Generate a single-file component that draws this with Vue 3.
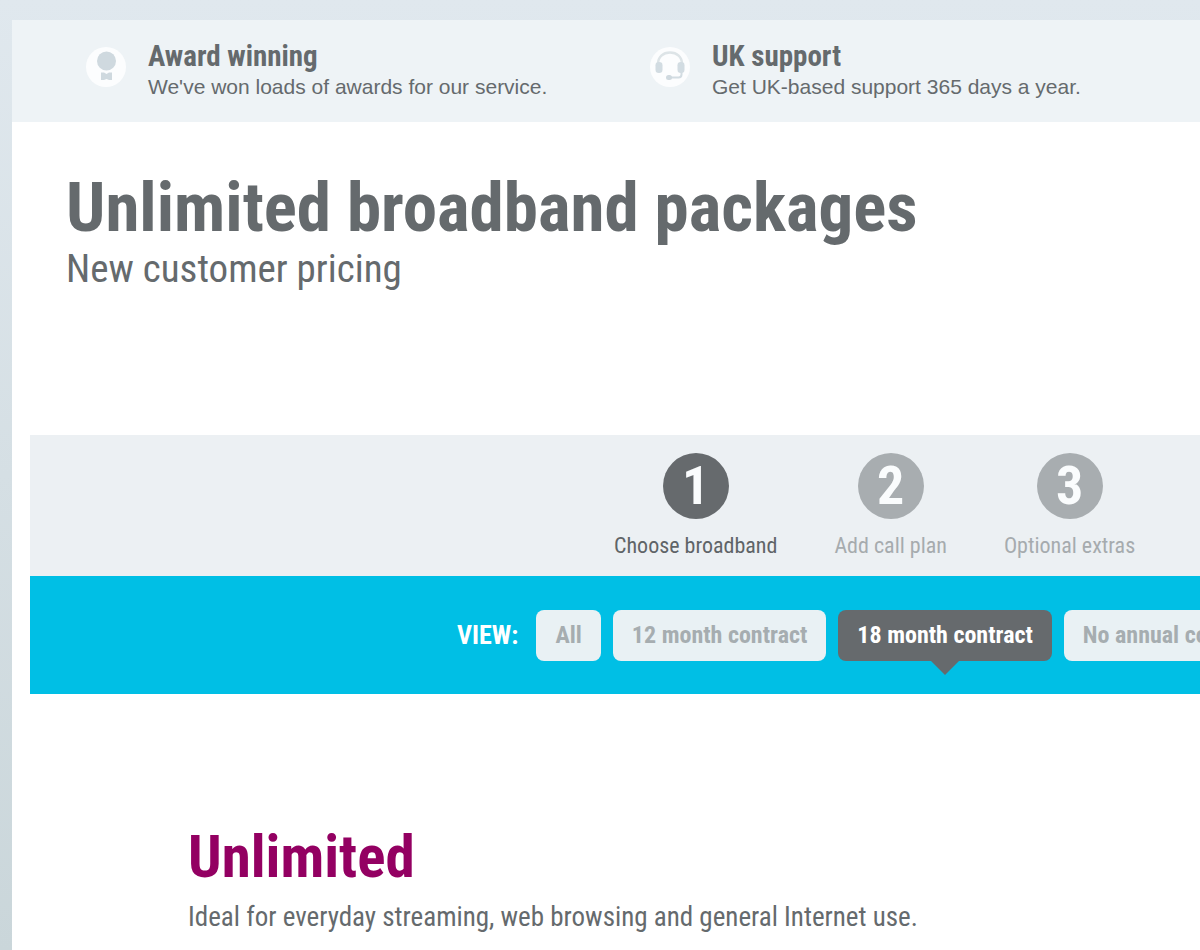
<script setup>
import { ref } from 'vue'

const steps = ['Choose broadband', 'Add call plan', 'Optional extras']
const currentStep = ref(0)

const contracts = ['All', '12 month contract', '18 month contract', 'No annual contract']
const selected = ref('18 month contract')
</script>

<template>
  <div class="page">
    <div class="sheet">
      <section class="benefits">
        <div class="benefit">
          <svg class="badge" viewBox="0 0 40 40" aria-hidden="true">
            <circle cx="20" cy="20" r="20" fill="#fcfdfe" />
            <path d="M15 25.500h3l2.500 1.500 2.500-1.500h3v7.500h-3l-2.500-1-2.500 1h-3z" fill="#cfd9df" />
            <circle cx="20.500" cy="14" r="9.500" fill="#cfd9df" />
          </svg>
          <div>
            <h2 class="benefit-title">Award winning</h2>
            <p class="benefit-text">We've won loads of awards for our service.</p>
          </div>
        </div>
        <div class="benefit">
          <svg class="badge" viewBox="0 0 40 40" aria-hidden="true">
            <circle cx="20" cy="20" r="20" fill="#fcfdfe" />
            <path d="M8 17C8 10 13 5.500 20 5.500S32 10 32 17" fill="none" stroke="#dde4e7" stroke-width="2.500" />
            <rect x="5.500" y="15" width="7" height="11" rx="3.300" fill="#d2dce2" />
            <rect x="27.500" y="15" width="7" height="11" rx="3.300" fill="#d2dce2" />
            <path d="M31.500 25v2.500q0 3-3 3H20" fill="none" stroke="#d2dce2" stroke-width="2" />
            <rect x="16" y="28" width="6" height="5" rx="2.500" fill="#cfd9df" />
          </svg>
          <div>
            <h2 class="benefit-title">UK support</h2>
            <p class="benefit-text">Get UK-based support 365 days a year.</p>
          </div>
        </div>
      </section>

      <header class="heading">
        <h1>Unlimited broadband packages</h1>
        <p>New customer pricing</p>
      </header>

      <main class="panel">
        <ol class="steps">
          <li v-for="(step, i) in steps" :key="step">
            <button
              type="button"
              class="step"
              :class="{ current: i === currentStep }"
              @click="currentStep = i"
            >
              <span class="number">{{ i + 1 }}</span>
              <span class="step-label">{{ step }}</span>
            </button>
          </li>
        </ol>

        <div class="filter" role="group" aria-labelledby="view-label">
          <span id="view-label" class="view">VIEW:</span>
          <button
            v-for="contract in contracts"
            :key="contract"
            type="button"
            class="choice"
            :class="{ active: contract === selected }"
            :aria-pressed="contract === selected"
            @click="selected = contract"
          >{{ contract }}</button>
        </div>

        <section class="package">
          <h2>Unlimited</h2>
          <p>Ideal for everyday streaming, web browsing and general Internet use.</p>
        </section>
      </main>
    </div>
  </div>
</template>

<style>
body {
  margin: 0;
}
</style>

<style scoped>
.page {
  box-sizing: border-box;
  min-height: 100vh;
  padding: 20px 0 0 12px;
  display: flex;
  overflow: hidden;
  background: linear-gradient(#e0e8ee, #cad6da);
  color: #656a6d;
  font-family: "Roboto Condensed", "Liberation Sans Narrow", Roboto, sans-serif;
}

h1, h2, p, ol {
  margin: 0;
  padding: 0;
}

button {
  border: 0;
  font: inherit;
  cursor: pointer;
}

.sheet {
  flex: 1;
  min-width: 0;
  background: #fff;
}

.benefits {
  display: flex;
  padding: 20px 0 20px 74px;
  background: #eef3f6;
}

.benefit {
  flex: 0 0 564px;
  display: flex;
  align-items: center;
  gap: 22px;
  height: 62px;
}

.badge {
  width: 40px;
  height: 40px;
  margin-bottom: 8px;
}

.benefit-title {
  font-size: 29px;
  line-height: 32px;
  white-space: nowrap;
}

.benefit-text {
  font-family: "Liberation Sans", Arial, sans-serif;
  font-size: 21px;
  line-height: 30px;
  white-space: nowrap;
}

.heading {
  padding: 48px 0 0 54px;
  white-space: nowrap;
}

.heading h1 {
  font-size: 69px;
  line-height: 76px;
}

.heading p {
  font-size: 39px;
  line-height: 46px;
}

.panel {
  margin: 143px 0 0 18px;
}

.steps {
  display: flex;
  gap: 57px;
  padding: 18px 0 14px 584px;
  background: #ecf0f3;
  list-style: none;
}

.step {
  display: flex;
  flex-direction: column;
  align-items: center;
  gap: 10px;
  padding: 0;
  background: none;
  color: #a6abae;
  white-space: nowrap;
}

.number {
  width: 66px;
  height: 66px;
  border-radius: 50%;
  background: #a8adb0;
  color: #fafcfd;
  font-size: 54px;
  font-weight: bold;
  line-height: 66px;
  text-align: center;
}

.step-label {
  font-size: 22px;
  line-height: 33px;
}

.current {
  color: #5f6467;
}

.current .number {
  background: #666a6d;
}

.filter {
  display: flex;
  align-items: center;
  gap: 12px;
  padding: 34px 0 33px 427px;
  background: #00bfe5;
  overflow: hidden;
  font-size: 24px;
  font-weight: bold;
  line-height: 51px;
  white-space: nowrap;
}

.view {
  margin-right: 6px;
  color: #fff;
  font-size: 26px;
}

.choice {
  position: relative;
  flex: none;
  padding: 0 19px;
  border-radius: 8px;
  background: #e9f1f4;
  color: #a6adb0;
}

.active {
  background: #666a6d;
  color: #fff;
}

.active::after {
  content: "";
  position: absolute;
  top: 100%;
  left: 50%;
  margin-left: -14px;
  border: 14px solid transparent;
  border-top-color: #666a6d;
  border-bottom: 0;
}

.package {
  padding: 131px 0 12px 158px;
  white-space: nowrap;
}

.package h2 {
  color: #930062;
  font-size: 59px;
  line-height: 64px;
}

.package p {
  margin-top: 10px;
  font-size: 27px;
  line-height: 36px;
}
</style>
